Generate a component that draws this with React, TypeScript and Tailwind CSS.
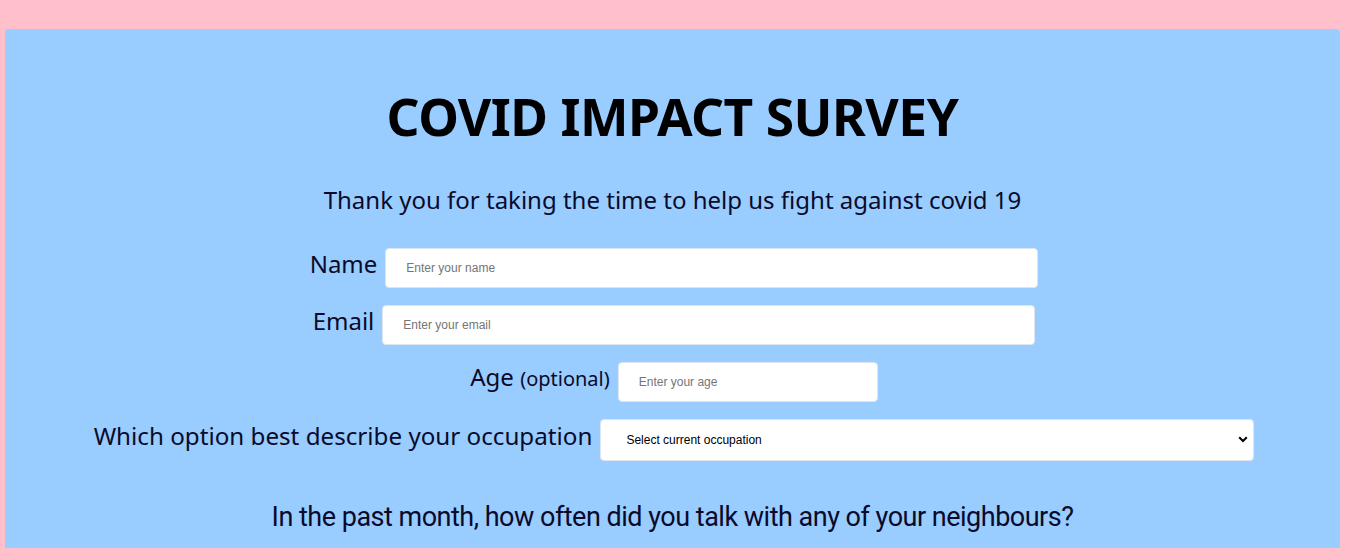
import React from 'react';

const font = { fontFamily: '"Noto Sans", "Open Sans", sans-serif' };
const inputFont = { fontFamily: '"Liberation Sans", Arial, sans-serif' };

const App: React.FC = () => {
	return (
		<div className="min-h-screen bg-[#ffc0cb] pt-[29px] px-[5px]">
			<div
				className="bg-[#99ccff] rounded-[4px] flex flex-col items-center pb-10 text-black"
				style={font}
			>
				<h1 className="mt-[57px] text-[51.5px] font-bold leading-[60px] tracking-[-0.5px]">
					COVID IMPACT SURVEY
				</h1>
				<p className="mt-[38px] text-[24px] leading-[32px] text-[#0a0a2a]">
					Thank you for taking the time to help us fight against covid 19
				</p>
				<div className="mt-[32px] flex flex-col items-center gap-[17px] pl-[3px]">
					<div className="flex items-center gap-2">
						<label className="text-[24px] leading-[32px] text-[#0a0a2a] -mt-2">Name</label>
						<input
							type="text"
							placeholder="Enter your name"
							className="w-[653px] h-[40px] bg-white rounded-[4px] border border-[#dde6ee] px-5 text-[12px] placeholder:text-[#757575] outline-none"
							style={inputFont}
						/>
					</div>
					<div className="flex items-center gap-2">
						<label className="text-[24px] leading-[32px] text-[#0a0a2a] -mt-2">Email</label>
						<input
							type="email"
							placeholder="Enter your email"
							className="w-[653px] h-[40px] bg-white rounded-[4px] border border-[#dde6ee] px-5 text-[12px] placeholder:text-[#757575] outline-none"
							style={inputFont}
						/>
					</div>
					<div className="flex items-center gap-2">
						<label className="text-[24px] leading-[32px] text-[#0a0a2a] -mt-2">
							Age <span className="text-[20px]">(optional)</span>
						</label>
						<input
							type="number"
							placeholder="Enter your age"
							className="w-[260px] h-[40px] bg-white rounded-[4px] border border-[#dde6ee] px-5 text-[12px] placeholder:text-[#757575] outline-none"
							style={inputFont}
						/>
					</div>
					<div className="flex items-center gap-2">
						<label className="text-[24.2px] leading-[32px] text-[#0a0a2a] -mt-2">
							Which option best describe your occupation
						</label>
						<div className="relative">
							<select
								className="appearance-none w-[654px] h-[42px] bg-white rounded-[4px] border border-[#dde6ee] pl-[25px] text-[12px] text-black outline-none"
								style={inputFont}
								defaultValue=""
							>
								<option value="">Select current occupation</option>
								<option value="student">Student</option>
								<option value="employed">Employed</option>
								<option value="unemployed">Unemployed</option>
							</select>
							<svg
								className="absolute right-[6px] top-[17px] pointer-events-none"
								width="10"
								height="7"
								viewBox="0 0 10 7"
							>
								<path d="M1.2 1.2 L5 5 L8.8 1.2" stroke="#000" strokeWidth="2" fill="none" />
							</svg>
						</div>
					</div>
				</div>
				<p
					className="mt-[40px] text-[27px] leading-[32px] tracking-[-0.5px] text-[#0a0a2a]"
					style={{ fontFamily: 'Roboto, "Noto Sans", sans-serif' }}
				>
					In the past month, how often did you talk with any of your neighbours?
				</p>
			</div>
		</div>
	);
};

export default App;
